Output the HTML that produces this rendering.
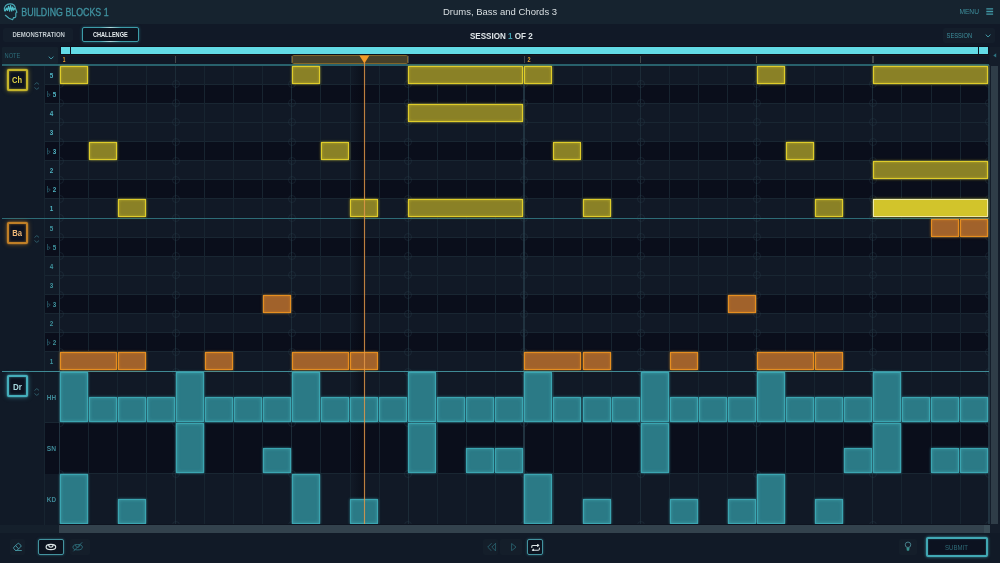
<!DOCTYPE html>
<html><head><meta charset="utf-8"><title>Building Blocks</title>
<style>
*{box-sizing:border-box;margin:0;padding:0}
html,body{width:1000px;height:563px;overflow:hidden;background:#111a27;font-family:"Liberation Sans",sans-serif;}
#app{position:relative;width:1000px;height:563px;overflow:hidden;background:#111a27;color:#5fb6c4}
.abs{position:absolute}
.t{position:absolute;white-space:nowrap;transform-origin:0 0}
#top{left:0;top:0;width:1000px;height:24px;background:#16232f}
#sub{left:0;top:24px;width:1000px;height:23px;background:#111927}
.row{position:absolute;left:59px;width:930px}
.rl{background:#111926}
.rd{background:#0a0e1b}
.hl{position:absolute;left:45px;width:944px;height:1.2px;background:#192632}
.vl{position:absolute;width:1px;background:#172430}
.vb{position:absolute;width:1px;background:#1c2b37}
.circ{position:absolute;width:8px;height:8px;border-radius:50%;border:1px solid rgba(40,62,76,.34)}
.n{position:absolute}
.y{background:#8a8126;border:1px solid #dfcc2a;box-shadow:0 0 2.5px rgba(233,214,42,.7), inset 0 0 3px rgba(233,214,42,.45)}
.yh{background:#d2c42b;border:1px solid #f0eca8;box-shadow:0 0 3px rgba(233,214,42,.6)}
.o{background:#a1622b;border:1px solid #e68e20;box-shadow:0 0 2.5px rgba(240,147,31,.7), inset 0 0 3px rgba(240,147,31,.45)}
.c{background:#2b7a86;border:1px solid #3ba5b1;box-shadow:0 0 2.5px rgba(63,185,197,.7), inset 0 0 3.5px rgba(90,205,215,.4)}
.labd{position:absolute;left:45px;width:14px;background:#0a0e1b}
.sep{position:absolute;left:2px;width:987px;height:2px}
</style></head><body><div id="app">

<div id="top" class="abs"></div><div id="sub" class="abs"></div>
<svg class="abs" style="left:986px;top:8px" width="8" height="8" viewBox="0 0 8 8"><path d="M0.3 0.85 H7.1 M0.3 3.5 H7.1 M0.3 6.15 H7.1" stroke="#4199a7" stroke-width="1.35" fill="none"/></svg>
<svg class="abs" style="left:0;top:0" width="24" height="24" viewBox="0 0 24 24"><path d="M4.6 10.8 C3.4 6.4 6.8 3.9 10 3.9 C13.3 3.9 15.2 6 15.5 8.8 L16.9 12.2 L15.8 13 L15.8 16.3 C15.8 17.4 14.9 17.8 13.6 17.6 L12.6 19.7 L9 18.3 L5.4 15.3" fill="none" stroke="#4aa9b5" stroke-width="1.15" stroke-linejoin="round" stroke-linecap="round"/><path d="M5.3 10.8 L6.4 8.2 L7.4 10.4 L8.5 6.4 L9.6 11.2 L10.6 5.6 L11.7 11 L12.7 7 L13.6 10.2 L14.6 8.6" fill="none" stroke="#4fbfc9" stroke-width="1.25" stroke-linejoin="round" stroke-linecap="round"/></svg>
<div class="abs" style="left:3px;top:27.5px;width:70px;height:14.5px;background:#141e2b;border-radius:2px"></div>
<div class="abs" style="left:82px;top:27px;width:57.2px;height:14.8px;background:#0d1420;border:1px solid #3c9ca8;box-shadow:0 0 3px rgba(58,163,176,.55);border-radius:2px"></div>
<div class="abs" style="left:100px;top:27px;width:21px;height:1px;background:linear-gradient(90deg,rgba(190,225,228,0),rgba(190,225,228,.9),rgba(190,225,228,0))"></div>
<div class="abs" style="left:100px;top:40.8px;width:21px;height:1px;background:linear-gradient(90deg,rgba(190,225,228,0),rgba(190,225,228,.9),rgba(190,225,228,0))"></div>
<div class="abs" style="left:942.8px;top:27.7px;width:52.4px;height:15.3px;background:#141e2b;border-radius:2px"></div>
<svg class="abs" style="left:984.5px;top:33.6px" width="6.2" height="3.8" viewBox="0 0 6.2 3.8"><path d="M0.7 0.6 L3.1 3 L5.5 0.6" fill="none" stroke="#45a3b1" stroke-width="0.95"/></svg>
<div class="abs" style="left:1.5px;top:47px;width:56.5px;height:16.5px;background:#15212d;border-radius:1px"></div>
<svg class="abs" style="left:48.2px;top:55.5px" width="6.2" height="3.8" viewBox="0 0 6.2 3.8"><path d="M0.7 0.6 L3.1 3 L5.5 0.6" fill="none" stroke="#45a3b1" stroke-width="0.95"/></svg>
<div class="abs" style="left:59.5px;top:46.2px;width:929.5px;height:9px;background:#0b111d"></div>
<div class="abs" style="left:60.5px;top:47.2px;width:9px;height:6.4px;background:#63dbe6"></div>
<div class="abs" style="left:70.6px;top:47.2px;width:907.3px;height:6.4px;background:#63dbe6"></div>
<div class="abs" style="left:978.9px;top:47.2px;width:9.6px;height:6.4px;background:#63dbe6"></div>
<div class="abs" style="left:59.5px;top:55.2px;width:929.5px;height:8.6px;background:#101725;border-top:1px solid #1b1a1e"></div>
<div class="abs" style="left:175.00px;top:56px;width:1.4px;height:6.8px;background:#40474a"></div>
<div class="abs" style="left:291.20px;top:56px;width:1.4px;height:6.8px;background:#40474a"></div>
<div class="abs" style="left:407.40px;top:56px;width:1.4px;height:6.8px;background:#40474a"></div>
<div class="abs" style="left:523.60px;top:56px;width:1.4px;height:6.8px;background:#40474a"></div>
<div class="abs" style="left:639.80px;top:56px;width:1.4px;height:6.8px;background:#40474a"></div>
<div class="abs" style="left:756.00px;top:56px;width:1.4px;height:6.8px;background:#40474a"></div>
<div class="abs" style="left:872.20px;top:56px;width:1.4px;height:6.8px;background:#40474a"></div>
<div class="abs" style="left:291.90px;top:55px;width:116.20px;height:8.5px;background:#46402a;border:1px solid #80652a;border-radius:1.5px"></div>
<div class="row rl" style="top:65.30px;height:19.05px"></div>
<div class="row rd" style="top:84.35px;height:19.05px"></div>
<div class="labd" style="top:84.35px;height:19.05px"></div>
<svg class="abs" style="left:47.2px;top:90.77px" width="3.4" height="6.6" viewBox="0 0 3.4 6.6"><path d="M0.5 0 V6.2 C2 5.4 2.9 4.6 2.9 3.7 C2.9 2.7 1.4 2.6 0.5 3.6" fill="none" stroke="#2b5f6d" stroke-width="0.75"/></svg>
<div class="row rl" style="top:103.40px;height:19.05px"></div>
<div class="row rl" style="top:122.45px;height:19.05px"></div>
<div class="row rd" style="top:141.50px;height:19.05px"></div>
<div class="labd" style="top:141.50px;height:19.05px"></div>
<svg class="abs" style="left:47.2px;top:147.93px" width="3.4" height="6.6" viewBox="0 0 3.4 6.6"><path d="M0.5 0 V6.2 C2 5.4 2.9 4.6 2.9 3.7 C2.9 2.7 1.4 2.6 0.5 3.6" fill="none" stroke="#2b5f6d" stroke-width="0.75"/></svg>
<div class="row rl" style="top:160.55px;height:19.05px"></div>
<div class="row rd" style="top:179.60px;height:19.05px"></div>
<div class="labd" style="top:179.60px;height:19.05px"></div>
<svg class="abs" style="left:47.2px;top:186.03px" width="3.4" height="6.6" viewBox="0 0 3.4 6.6"><path d="M0.5 0 V6.2 C2 5.4 2.9 4.6 2.9 3.7 C2.9 2.7 1.4 2.6 0.5 3.6" fill="none" stroke="#2b5f6d" stroke-width="0.75"/></svg>
<div class="row rl" style="top:198.65px;height:19.05px"></div>
<div class="hl" style="top:83.85px"></div>
<div class="hl" style="top:102.90px"></div>
<div class="hl" style="top:121.95px"></div>
<div class="hl" style="top:141.00px"></div>
<div class="hl" style="top:160.05px"></div>
<div class="hl" style="top:179.10px"></div>
<div class="hl" style="top:198.15px"></div>
<div class="row rl" style="top:218.20px;height:19.08px"></div>
<div class="row rd" style="top:237.28px;height:19.08px"></div>
<div class="labd" style="top:237.28px;height:19.08px"></div>
<svg class="abs" style="left:47.2px;top:243.72px" width="3.4" height="6.6" viewBox="0 0 3.4 6.6"><path d="M0.5 0 V6.2 C2 5.4 2.9 4.6 2.9 3.7 C2.9 2.7 1.4 2.6 0.5 3.6" fill="none" stroke="#2b5f6d" stroke-width="0.75"/></svg>
<div class="row rl" style="top:256.36px;height:19.08px"></div>
<div class="row rl" style="top:275.44px;height:19.08px"></div>
<div class="row rd" style="top:294.52px;height:19.08px"></div>
<div class="labd" style="top:294.52px;height:19.08px"></div>
<svg class="abs" style="left:47.2px;top:300.96px" width="3.4" height="6.6" viewBox="0 0 3.4 6.6"><path d="M0.5 0 V6.2 C2 5.4 2.9 4.6 2.9 3.7 C2.9 2.7 1.4 2.6 0.5 3.6" fill="none" stroke="#2b5f6d" stroke-width="0.75"/></svg>
<div class="row rl" style="top:313.60px;height:19.08px"></div>
<div class="row rd" style="top:332.68px;height:19.08px"></div>
<div class="labd" style="top:332.68px;height:19.08px"></div>
<svg class="abs" style="left:47.2px;top:339.12px" width="3.4" height="6.6" viewBox="0 0 3.4 6.6"><path d="M0.5 0 V6.2 C2 5.4 2.9 4.6 2.9 3.7 C2.9 2.7 1.4 2.6 0.5 3.6" fill="none" stroke="#2b5f6d" stroke-width="0.75"/></svg>
<div class="row rl" style="top:351.76px;height:19.08px"></div>
<div class="hl" style="top:236.78px"></div>
<div class="hl" style="top:255.86px"></div>
<div class="hl" style="top:274.94px"></div>
<div class="hl" style="top:294.02px"></div>
<div class="hl" style="top:313.10px"></div>
<div class="hl" style="top:332.18px"></div>
<div class="hl" style="top:351.26px"></div>
<div class="row rl" style="top:371.50px;height:51.00px"></div>
<div class="row rd" style="top:422.50px;height:51.00px"></div>
<div class="row rl" style="top:473.50px;height:51.00px"></div>
<div class="hl" style="top:422.00px"></div>
<div class="hl" style="top:473.00px"></div>
<div class="labd" style="top:422.50px;height:51.00px"></div>
<div class="abs" style="left:58.60px;top:65px;width:1.8px;height:460px;background:#213340"></div>
<div class="vl" style="left:88.05px;top:65px;height:460px"></div>
<div class="vl" style="left:117.10px;top:65px;height:460px"></div>
<div class="vl" style="left:146.15px;top:65px;height:460px"></div>
<div class="vb" style="left:175.20px;top:65px;height:460px"></div>
<div class="vl" style="left:204.25px;top:65px;height:460px"></div>
<div class="vl" style="left:233.30px;top:65px;height:460px"></div>
<div class="vl" style="left:262.35px;top:65px;height:460px"></div>
<div class="vb" style="left:291.40px;top:65px;height:460px"></div>
<div class="vl" style="left:320.45px;top:65px;height:460px"></div>
<div class="vl" style="left:349.50px;top:65px;height:460px"></div>
<div class="vl" style="left:378.55px;top:65px;height:460px"></div>
<div class="vb" style="left:407.60px;top:65px;height:460px"></div>
<div class="vl" style="left:436.65px;top:65px;height:460px"></div>
<div class="vl" style="left:465.70px;top:65px;height:460px"></div>
<div class="vl" style="left:494.75px;top:65px;height:460px"></div>
<div class="abs" style="left:523.40px;top:65px;width:1.8px;height:460px;background:#213340"></div>
<div class="vl" style="left:552.85px;top:65px;height:460px"></div>
<div class="vl" style="left:581.90px;top:65px;height:460px"></div>
<div class="vl" style="left:610.95px;top:65px;height:460px"></div>
<div class="vb" style="left:640.00px;top:65px;height:460px"></div>
<div class="vl" style="left:669.05px;top:65px;height:460px"></div>
<div class="vl" style="left:698.10px;top:65px;height:460px"></div>
<div class="vl" style="left:727.15px;top:65px;height:460px"></div>
<div class="vb" style="left:756.20px;top:65px;height:460px"></div>
<div class="vl" style="left:785.25px;top:65px;height:460px"></div>
<div class="vl" style="left:814.30px;top:65px;height:460px"></div>
<div class="vl" style="left:843.35px;top:65px;height:460px"></div>
<div class="vb" style="left:872.40px;top:65px;height:460px"></div>
<div class="vl" style="left:901.45px;top:65px;height:460px"></div>
<div class="vl" style="left:930.50px;top:65px;height:460px"></div>
<div class="vl" style="left:959.55px;top:65px;height:460px"></div>
<div class="abs" style="left:988.20px;top:65px;width:1.8px;height:460px;background:#213340"></div>
<div class="vl" style="left:44.3px;top:65px;height:460px"></div>
<div class="abs" style="left:59.5px;top:65px;width:929.5px;height:460px;overflow:hidden">
<div class="circ" style="left:-4.00px;top:15.35px"></div>
<div class="circ" style="left:-4.00px;top:34.40px"></div>
<div class="circ" style="left:-4.00px;top:53.45px"></div>
<div class="circ" style="left:-4.00px;top:72.50px"></div>
<div class="circ" style="left:-4.00px;top:91.55px"></div>
<div class="circ" style="left:-4.00px;top:110.60px"></div>
<div class="circ" style="left:-4.00px;top:129.65px"></div>
<div class="circ" style="left:-4.00px;top:168.28px"></div>
<div class="circ" style="left:-4.00px;top:187.36px"></div>
<div class="circ" style="left:-4.00px;top:206.44px"></div>
<div class="circ" style="left:-4.00px;top:225.52px"></div>
<div class="circ" style="left:-4.00px;top:244.60px"></div>
<div class="circ" style="left:-4.00px;top:263.68px"></div>
<div class="circ" style="left:-4.00px;top:282.76px"></div>
<div class="circ" style="left:-4.00px;top:353.50px"></div>
<div class="circ" style="left:-4.00px;top:404.50px"></div>
<div class="circ" style="left:-4.00px;top:149.20px"></div>
<div class="circ" style="left:-4.00px;top:302.50px"></div>
<div class="circ" style="left:-4.00px;top:455.50px"></div>
<div class="circ" style="left:112.20px;top:15.35px"></div>
<div class="circ" style="left:112.20px;top:34.40px"></div>
<div class="circ" style="left:112.20px;top:53.45px"></div>
<div class="circ" style="left:112.20px;top:72.50px"></div>
<div class="circ" style="left:112.20px;top:91.55px"></div>
<div class="circ" style="left:112.20px;top:110.60px"></div>
<div class="circ" style="left:112.20px;top:129.65px"></div>
<div class="circ" style="left:112.20px;top:168.28px"></div>
<div class="circ" style="left:112.20px;top:187.36px"></div>
<div class="circ" style="left:112.20px;top:206.44px"></div>
<div class="circ" style="left:112.20px;top:225.52px"></div>
<div class="circ" style="left:112.20px;top:244.60px"></div>
<div class="circ" style="left:112.20px;top:263.68px"></div>
<div class="circ" style="left:112.20px;top:282.76px"></div>
<div class="circ" style="left:112.20px;top:353.50px"></div>
<div class="circ" style="left:112.20px;top:404.50px"></div>
<div class="circ" style="left:112.20px;top:149.20px"></div>
<div class="circ" style="left:112.20px;top:302.50px"></div>
<div class="circ" style="left:112.20px;top:455.50px"></div>
<div class="circ" style="left:228.40px;top:15.35px"></div>
<div class="circ" style="left:228.40px;top:34.40px"></div>
<div class="circ" style="left:228.40px;top:53.45px"></div>
<div class="circ" style="left:228.40px;top:72.50px"></div>
<div class="circ" style="left:228.40px;top:91.55px"></div>
<div class="circ" style="left:228.40px;top:110.60px"></div>
<div class="circ" style="left:228.40px;top:129.65px"></div>
<div class="circ" style="left:228.40px;top:168.28px"></div>
<div class="circ" style="left:228.40px;top:187.36px"></div>
<div class="circ" style="left:228.40px;top:206.44px"></div>
<div class="circ" style="left:228.40px;top:225.52px"></div>
<div class="circ" style="left:228.40px;top:244.60px"></div>
<div class="circ" style="left:228.40px;top:263.68px"></div>
<div class="circ" style="left:228.40px;top:282.76px"></div>
<div class="circ" style="left:228.40px;top:353.50px"></div>
<div class="circ" style="left:228.40px;top:404.50px"></div>
<div class="circ" style="left:228.40px;top:149.20px"></div>
<div class="circ" style="left:228.40px;top:302.50px"></div>
<div class="circ" style="left:228.40px;top:455.50px"></div>
<div class="circ" style="left:344.60px;top:15.35px"></div>
<div class="circ" style="left:344.60px;top:34.40px"></div>
<div class="circ" style="left:344.60px;top:53.45px"></div>
<div class="circ" style="left:344.60px;top:72.50px"></div>
<div class="circ" style="left:344.60px;top:91.55px"></div>
<div class="circ" style="left:344.60px;top:110.60px"></div>
<div class="circ" style="left:344.60px;top:129.65px"></div>
<div class="circ" style="left:344.60px;top:168.28px"></div>
<div class="circ" style="left:344.60px;top:187.36px"></div>
<div class="circ" style="left:344.60px;top:206.44px"></div>
<div class="circ" style="left:344.60px;top:225.52px"></div>
<div class="circ" style="left:344.60px;top:244.60px"></div>
<div class="circ" style="left:344.60px;top:263.68px"></div>
<div class="circ" style="left:344.60px;top:282.76px"></div>
<div class="circ" style="left:344.60px;top:353.50px"></div>
<div class="circ" style="left:344.60px;top:404.50px"></div>
<div class="circ" style="left:344.60px;top:149.20px"></div>
<div class="circ" style="left:344.60px;top:302.50px"></div>
<div class="circ" style="left:344.60px;top:455.50px"></div>
<div class="circ" style="left:460.80px;top:15.35px"></div>
<div class="circ" style="left:460.80px;top:34.40px"></div>
<div class="circ" style="left:460.80px;top:53.45px"></div>
<div class="circ" style="left:460.80px;top:72.50px"></div>
<div class="circ" style="left:460.80px;top:91.55px"></div>
<div class="circ" style="left:460.80px;top:110.60px"></div>
<div class="circ" style="left:460.80px;top:129.65px"></div>
<div class="circ" style="left:460.80px;top:168.28px"></div>
<div class="circ" style="left:460.80px;top:187.36px"></div>
<div class="circ" style="left:460.80px;top:206.44px"></div>
<div class="circ" style="left:460.80px;top:225.52px"></div>
<div class="circ" style="left:460.80px;top:244.60px"></div>
<div class="circ" style="left:460.80px;top:263.68px"></div>
<div class="circ" style="left:460.80px;top:282.76px"></div>
<div class="circ" style="left:460.80px;top:353.50px"></div>
<div class="circ" style="left:460.80px;top:404.50px"></div>
<div class="circ" style="left:460.80px;top:149.20px"></div>
<div class="circ" style="left:460.80px;top:302.50px"></div>
<div class="circ" style="left:460.80px;top:455.50px"></div>
<div class="circ" style="left:577.00px;top:15.35px"></div>
<div class="circ" style="left:577.00px;top:34.40px"></div>
<div class="circ" style="left:577.00px;top:53.45px"></div>
<div class="circ" style="left:577.00px;top:72.50px"></div>
<div class="circ" style="left:577.00px;top:91.55px"></div>
<div class="circ" style="left:577.00px;top:110.60px"></div>
<div class="circ" style="left:577.00px;top:129.65px"></div>
<div class="circ" style="left:577.00px;top:168.28px"></div>
<div class="circ" style="left:577.00px;top:187.36px"></div>
<div class="circ" style="left:577.00px;top:206.44px"></div>
<div class="circ" style="left:577.00px;top:225.52px"></div>
<div class="circ" style="left:577.00px;top:244.60px"></div>
<div class="circ" style="left:577.00px;top:263.68px"></div>
<div class="circ" style="left:577.00px;top:282.76px"></div>
<div class="circ" style="left:577.00px;top:353.50px"></div>
<div class="circ" style="left:577.00px;top:404.50px"></div>
<div class="circ" style="left:577.00px;top:149.20px"></div>
<div class="circ" style="left:577.00px;top:302.50px"></div>
<div class="circ" style="left:577.00px;top:455.50px"></div>
<div class="circ" style="left:693.20px;top:15.35px"></div>
<div class="circ" style="left:693.20px;top:34.40px"></div>
<div class="circ" style="left:693.20px;top:53.45px"></div>
<div class="circ" style="left:693.20px;top:72.50px"></div>
<div class="circ" style="left:693.20px;top:91.55px"></div>
<div class="circ" style="left:693.20px;top:110.60px"></div>
<div class="circ" style="left:693.20px;top:129.65px"></div>
<div class="circ" style="left:693.20px;top:168.28px"></div>
<div class="circ" style="left:693.20px;top:187.36px"></div>
<div class="circ" style="left:693.20px;top:206.44px"></div>
<div class="circ" style="left:693.20px;top:225.52px"></div>
<div class="circ" style="left:693.20px;top:244.60px"></div>
<div class="circ" style="left:693.20px;top:263.68px"></div>
<div class="circ" style="left:693.20px;top:282.76px"></div>
<div class="circ" style="left:693.20px;top:353.50px"></div>
<div class="circ" style="left:693.20px;top:404.50px"></div>
<div class="circ" style="left:693.20px;top:149.20px"></div>
<div class="circ" style="left:693.20px;top:302.50px"></div>
<div class="circ" style="left:693.20px;top:455.50px"></div>
<div class="circ" style="left:809.40px;top:15.35px"></div>
<div class="circ" style="left:809.40px;top:34.40px"></div>
<div class="circ" style="left:809.40px;top:53.45px"></div>
<div class="circ" style="left:809.40px;top:72.50px"></div>
<div class="circ" style="left:809.40px;top:91.55px"></div>
<div class="circ" style="left:809.40px;top:110.60px"></div>
<div class="circ" style="left:809.40px;top:129.65px"></div>
<div class="circ" style="left:809.40px;top:168.28px"></div>
<div class="circ" style="left:809.40px;top:187.36px"></div>
<div class="circ" style="left:809.40px;top:206.44px"></div>
<div class="circ" style="left:809.40px;top:225.52px"></div>
<div class="circ" style="left:809.40px;top:244.60px"></div>
<div class="circ" style="left:809.40px;top:263.68px"></div>
<div class="circ" style="left:809.40px;top:282.76px"></div>
<div class="circ" style="left:809.40px;top:353.50px"></div>
<div class="circ" style="left:809.40px;top:404.50px"></div>
<div class="circ" style="left:809.40px;top:149.20px"></div>
<div class="circ" style="left:809.40px;top:302.50px"></div>
<div class="circ" style="left:809.40px;top:455.50px"></div>
<div class="circ" style="left:925.60px;top:15.35px"></div>
<div class="circ" style="left:925.60px;top:34.40px"></div>
<div class="circ" style="left:925.60px;top:53.45px"></div>
<div class="circ" style="left:925.60px;top:72.50px"></div>
<div class="circ" style="left:925.60px;top:91.55px"></div>
<div class="circ" style="left:925.60px;top:110.60px"></div>
<div class="circ" style="left:925.60px;top:129.65px"></div>
<div class="circ" style="left:925.60px;top:168.28px"></div>
<div class="circ" style="left:925.60px;top:187.36px"></div>
<div class="circ" style="left:925.60px;top:206.44px"></div>
<div class="circ" style="left:925.60px;top:225.52px"></div>
<div class="circ" style="left:925.60px;top:244.60px"></div>
<div class="circ" style="left:925.60px;top:263.68px"></div>
<div class="circ" style="left:925.60px;top:282.76px"></div>
<div class="circ" style="left:925.60px;top:353.50px"></div>
<div class="circ" style="left:925.60px;top:404.50px"></div>
<div class="circ" style="left:925.60px;top:149.20px"></div>
<div class="circ" style="left:925.60px;top:302.50px"></div>
<div class="circ" style="left:925.60px;top:455.50px"></div>
</div>
<div class="sep" style="top:64.4px;height:1.2px;background:#28616c"></div>
<div class="sep" style="top:217.6px;height:1.2px;background:#2d6b76"></div>
<div class="sep" style="top:370.8px;height:1.2px;background:#3f8a95"></div>
<div class="abs" style="left:351.6px;top:65.5px;width:13px;height:459px;background:linear-gradient(90deg,rgba(4,6,14,0),rgba(4,6,14,.5))"></div>
<div class="n y" style="left:59.60px;top:65.80px;width:28.05px;height:18.05px"></div>
<div class="n y" style="left:292.00px;top:65.80px;width:28.05px;height:18.05px"></div>
<div class="n y" style="left:408.20px;top:65.80px;width:115.20px;height:18.05px"></div>
<div class="n y" style="left:524.40px;top:65.80px;width:28.05px;height:18.05px"></div>
<div class="n y" style="left:756.80px;top:65.80px;width:28.05px;height:18.05px"></div>
<div class="n y" style="left:873.00px;top:65.80px;width:115.20px;height:18.05px"></div>
<div class="n y" style="left:408.20px;top:103.90px;width:115.20px;height:18.05px"></div>
<div class="n y" style="left:88.65px;top:142.00px;width:28.05px;height:18.05px"></div>
<div class="n y" style="left:321.05px;top:142.00px;width:28.05px;height:18.05px"></div>
<div class="n y" style="left:553.45px;top:142.00px;width:28.05px;height:18.05px"></div>
<div class="n y" style="left:785.85px;top:142.00px;width:28.05px;height:18.05px"></div>
<div class="n y" style="left:873.00px;top:161.05px;width:115.20px;height:18.05px"></div>
<div class="n y" style="left:117.70px;top:199.15px;width:28.05px;height:18.05px"></div>
<div class="n y" style="left:350.10px;top:199.15px;width:28.05px;height:18.05px"></div>
<div class="n y" style="left:408.20px;top:199.15px;width:115.20px;height:18.05px"></div>
<div class="n y" style="left:582.50px;top:199.15px;width:28.05px;height:18.05px"></div>
<div class="n y" style="left:814.90px;top:199.15px;width:28.05px;height:18.05px"></div>
<div class="n yh" style="left:873.00px;top:199.15px;width:115.20px;height:18.05px"></div>
<div class="n o" style="left:931.10px;top:218.70px;width:28.05px;height:18.08px"></div>
<div class="n o" style="left:960.15px;top:218.70px;width:28.05px;height:18.08px"></div>
<div class="n o" style="left:262.95px;top:295.02px;width:28.05px;height:18.08px"></div>
<div class="n o" style="left:727.75px;top:295.02px;width:28.05px;height:18.08px"></div>
<div class="n o" style="left:59.60px;top:352.26px;width:57.10px;height:18.08px"></div>
<div class="n o" style="left:117.70px;top:352.26px;width:28.05px;height:18.08px"></div>
<div class="n o" style="left:204.85px;top:352.26px;width:28.05px;height:18.08px"></div>
<div class="n o" style="left:292.00px;top:352.26px;width:57.10px;height:18.08px"></div>
<div class="n o" style="left:350.10px;top:352.26px;width:28.05px;height:18.08px"></div>
<div class="n o" style="left:524.40px;top:352.26px;width:57.10px;height:18.08px"></div>
<div class="n o" style="left:582.50px;top:352.26px;width:28.05px;height:18.08px"></div>
<div class="n o" style="left:669.65px;top:352.26px;width:28.05px;height:18.08px"></div>
<div class="n o" style="left:756.80px;top:352.26px;width:57.10px;height:18.08px"></div>
<div class="n o" style="left:814.90px;top:352.26px;width:28.05px;height:18.08px"></div>
<div class="n c" style="left:59.60px;top:371.80px;width:28.05px;height:49.80px"></div>
<div class="n c" style="left:88.65px;top:396.80px;width:28.05px;height:24.80px"></div>
<div class="n c" style="left:117.70px;top:396.80px;width:28.05px;height:24.80px"></div>
<div class="n c" style="left:146.75px;top:396.80px;width:28.05px;height:24.80px"></div>
<div class="n c" style="left:175.80px;top:371.80px;width:28.05px;height:49.80px"></div>
<div class="n c" style="left:204.85px;top:396.80px;width:28.05px;height:24.80px"></div>
<div class="n c" style="left:233.90px;top:396.80px;width:28.05px;height:24.80px"></div>
<div class="n c" style="left:262.95px;top:396.80px;width:28.05px;height:24.80px"></div>
<div class="n c" style="left:292.00px;top:371.80px;width:28.05px;height:49.80px"></div>
<div class="n c" style="left:321.05px;top:396.80px;width:28.05px;height:24.80px"></div>
<div class="n c" style="left:350.10px;top:396.80px;width:28.05px;height:24.80px"></div>
<div class="n c" style="left:379.15px;top:396.80px;width:28.05px;height:24.80px"></div>
<div class="n c" style="left:408.20px;top:371.80px;width:28.05px;height:49.80px"></div>
<div class="n c" style="left:437.25px;top:396.80px;width:28.05px;height:24.80px"></div>
<div class="n c" style="left:466.30px;top:396.80px;width:28.05px;height:24.80px"></div>
<div class="n c" style="left:495.35px;top:396.80px;width:28.05px;height:24.80px"></div>
<div class="n c" style="left:524.40px;top:371.80px;width:28.05px;height:49.80px"></div>
<div class="n c" style="left:553.45px;top:396.80px;width:28.05px;height:24.80px"></div>
<div class="n c" style="left:582.50px;top:396.80px;width:28.05px;height:24.80px"></div>
<div class="n c" style="left:611.55px;top:396.80px;width:28.05px;height:24.80px"></div>
<div class="n c" style="left:640.60px;top:371.80px;width:28.05px;height:49.80px"></div>
<div class="n c" style="left:669.65px;top:396.80px;width:28.05px;height:24.80px"></div>
<div class="n c" style="left:698.70px;top:396.80px;width:28.05px;height:24.80px"></div>
<div class="n c" style="left:727.75px;top:396.80px;width:28.05px;height:24.80px"></div>
<div class="n c" style="left:756.80px;top:371.80px;width:28.05px;height:49.80px"></div>
<div class="n c" style="left:785.85px;top:396.80px;width:28.05px;height:24.80px"></div>
<div class="n c" style="left:814.90px;top:396.80px;width:28.05px;height:24.80px"></div>
<div class="n c" style="left:843.95px;top:396.80px;width:28.05px;height:24.80px"></div>
<div class="n c" style="left:873.00px;top:371.80px;width:28.05px;height:49.80px"></div>
<div class="n c" style="left:902.05px;top:396.80px;width:28.05px;height:24.80px"></div>
<div class="n c" style="left:931.10px;top:396.80px;width:28.05px;height:24.80px"></div>
<div class="n c" style="left:960.15px;top:396.80px;width:28.05px;height:24.80px"></div>
<div class="n c" style="left:175.80px;top:422.80px;width:28.05px;height:49.80px"></div>
<div class="n c" style="left:262.95px;top:447.80px;width:28.05px;height:24.80px"></div>
<div class="n c" style="left:408.20px;top:422.80px;width:28.05px;height:49.80px"></div>
<div class="n c" style="left:466.30px;top:447.80px;width:28.05px;height:24.80px"></div>
<div class="n c" style="left:495.35px;top:447.80px;width:28.05px;height:24.80px"></div>
<div class="n c" style="left:640.60px;top:422.80px;width:28.05px;height:49.80px"></div>
<div class="n c" style="left:843.95px;top:447.80px;width:28.05px;height:24.80px"></div>
<div class="n c" style="left:873.00px;top:422.80px;width:28.05px;height:49.80px"></div>
<div class="n c" style="left:931.10px;top:447.80px;width:28.05px;height:24.80px"></div>
<div class="n c" style="left:960.15px;top:447.80px;width:28.05px;height:24.80px"></div>
<div class="n c" style="left:59.60px;top:473.80px;width:28.05px;height:49.80px"></div>
<div class="n c" style="left:117.70px;top:498.80px;width:28.05px;height:24.80px"></div>
<div class="n c" style="left:292.00px;top:473.80px;width:28.05px;height:49.80px"></div>
<div class="n c" style="left:350.10px;top:498.80px;width:28.05px;height:24.80px"></div>
<div class="n c" style="left:524.40px;top:473.80px;width:28.05px;height:49.80px"></div>
<div class="n c" style="left:582.50px;top:498.80px;width:28.05px;height:24.80px"></div>
<div class="n c" style="left:669.65px;top:498.80px;width:28.05px;height:24.80px"></div>
<div class="n c" style="left:727.75px;top:498.80px;width:28.05px;height:24.80px"></div>
<div class="n c" style="left:756.80px;top:473.80px;width:28.05px;height:49.80px"></div>
<div class="n c" style="left:814.90px;top:498.80px;width:28.05px;height:24.80px"></div>
<div class="abs" style="left:363.8px;top:60px;width:1.6px;height:465px;background:rgba(228,152,72,.82);box-shadow:0 0 1.5px rgba(210,140,60,.45)"></div>
<svg class="abs" style="left:359.20000000000005px;top:55px" width="10.8" height="9" viewBox="0 0 10.8 9"><path d="M0.4 0.4 H10.4 L5.4 8.6 Z" fill="#f29a27"/></svg>
<div class="abs" style="left:6.5px;top:68.9px;width:21.8px;height:21.8px;border:2px solid #c4b42b;border-radius:2px;background:#0c1220;box-shadow:0 0 1.5px #c4b42b, 0 0 5px #c4b42b99, inset 0 0 2.5px #c4b42baa"></div>
<svg class="abs" style="left:33.6px;top:81.5px" width="5.6" height="8" viewBox="0 0 5.6 8"><path d="M0.5 2.5 L2.8 0.6 L5.1 2.5 M0.5 5.5 L2.8 7.4 L5.1 5.5" fill="none" stroke="#326774" stroke-width="0.85"/></svg>
<div class="abs" style="left:6.5px;top:222.0px;width:21.8px;height:21.8px;border:2px solid #c07f27;border-radius:2px;background:#0c1220;box-shadow:0 0 1.5px #c07f27, 0 0 5px #c07f2799, inset 0 0 2.5px #c07f27aa"></div>
<svg class="abs" style="left:33.6px;top:234.6px" width="5.6" height="8" viewBox="0 0 5.6 8"><path d="M0.5 2.5 L2.8 0.6 L5.1 2.5 M0.5 5.5 L2.8 7.4 L5.1 5.5" fill="none" stroke="#326774" stroke-width="0.85"/></svg>
<div class="abs" style="left:6.5px;top:375.1px;width:21.8px;height:21.8px;border:2px solid #45aebb;border-radius:2px;background:#0c1220;box-shadow:0 0 1.5px #45aebb, 0 0 5px #45aebb99, inset 0 0 2.5px #45aebbaa"></div>
<svg class="abs" style="left:33.6px;top:387.70000000000005px" width="5.6" height="8" viewBox="0 0 5.6 8"><path d="M0.5 2.5 L2.8 0.6 L5.1 2.5 M0.5 5.5 L2.8 7.4 L5.1 5.5" fill="none" stroke="#326774" stroke-width="0.85"/></svg>
<div class="abs" style="left:989.5px;top:47px;width:10.5px;height:486px;background:#141d2a"></div>
<div class="abs" style="left:990.8px;top:65.8px;width:7px;height:458.2px;background:#2f3d48"></div>
<svg class="abs" style="left:993.2px;top:53.2px" width="3.4" height="4.8" viewBox="0 0 3.4 4.8"><path d="M3.2 0.2 L0.3 2.4 L3.2 4.6 Z" fill="#2d7482"/></svg>
<div class="abs" style="left:0;top:524.8px;width:990px;height:8.2px;background:#15202c"></div>
<div class="abs" style="left:59px;top:523.8px;width:930.5px;height:1.6px;background:#0e1420"></div>
<div class="abs" style="left:59px;top:525.3px;width:931px;height:7.6px;background:#33424d"></div>
<div class="abs" style="left:983.5px;top:525.3px;width:6.5px;height:7.6px;background:#3a4c56"></div>
<div class="abs" style="left:0;top:533px;width:1000px;height:30px;background:#111a27"></div>
<div class="abs" style="left:9.7px;top:538.9px;width:15.8px;height:15.8px;background:#141e2a;border-radius:2px"></div>
<div class="abs" style="left:38px;top:538.7px;width:26.4px;height:16.7px;background:#0c131f;border:1.2px solid #43939f;box-shadow:0 0 2.5px rgba(58,163,176,.55);border-radius:2px"></div>
<div class="abs" style="left:70.4px;top:538.9px;width:19.3px;height:15.8px;background:#141e2a;border-radius:2px"></div>
<svg class="abs" style="left:12px;top:542px" width="11" height="10" viewBox="0 0 11 10"><g transform="rotate(-42 5.3 5)" fill="none" stroke="#4596a3" stroke-width="0.9"><rect x="1.6" y="2.8" width="7.4" height="4.4" rx="1.2"/><path d="M5 2.8 V7.2"/></g><path d="M3.6 8.5 H9.4" stroke="#4596a3" stroke-width="0.9" fill="none" stroke-linecap="round"/></svg>
<svg class="abs" style="left:45px;top:543px" width="12" height="8" viewBox="0 0 12 8"><ellipse cx="5.9" cy="3.95" rx="4.8" ry="2.6" fill="none" stroke="#dbe4e6" stroke-width="1.15"/><path d="M3.7 1.7 C3.7 5 8.1 5 8.1 1.7" fill="none" stroke="#dbe4e6" stroke-width="1.15"/></svg>
<svg class="abs" style="left:71.5px;top:541.8px" width="12" height="10" viewBox="0 0 12 10"><ellipse cx="5.65" cy="5.2" rx="4.7" ry="2.7" fill="none" stroke="#2f7582" stroke-width="0.85"/><path d="M3.5 3.1 C3.5 6.3 7.8 6.3 7.8 3.1 M1.7 9 L9.9 0.6" fill="none" stroke="#2f7582" stroke-width="0.85" stroke-linecap="round"/></svg>
<div class="abs" style="left:483.3px;top:538.9px;width:14.7px;height:15.8px;background:#141e2a;border-radius:2px"></div>
<div class="abs" style="left:500.2px;top:538.9px;width:21.4px;height:15.8px;background:#141e2a;border-radius:2px"></div>
<div class="abs" style="left:526.8px;top:538.7px;width:16.6px;height:16.5px;background:#0c131f;border:1.2px solid #43939f;box-shadow:0 0 2.5px rgba(58,163,176,.55);border-radius:2px"></div>
<svg class="abs" style="left:486.6px;top:543px" width="9.2" height="8.4" viewBox="0 0 9.2 8.4"><path d="M4.3 0.5 L0.7 4.1 L4.3 7.7 M8.4 0.5 L4.8 4.1 L8.4 7.7 Z" fill="none" stroke="#2b6671" stroke-width="0.85" stroke-linejoin="round" stroke-linecap="round"/></svg>
<svg class="abs" style="left:510.6px;top:543.2px" width="5.8" height="8.2" viewBox="0 0 5.8 8.2"><path d="M0.6 0.5 L5.1 4.1 L0.6 7.7 Z" fill="none" stroke="#2b6671" stroke-width="0.85" stroke-linejoin="round"/></svg>
<svg class="abs" style="left:531px;top:543.6px" width="9.2" height="7.6" viewBox="0 0 9.2 7.6"><path d="M0.8 3.5 V2.6 Q0.8 1.4 2 1.4 H7.6 M6.6 0.4 L7.8 1.4 L6.6 2.4 M8.4 4.1 V5 Q8.4 6.2 7.2 6.2 H1.6 M2.6 5.2 L1.4 6.2 L2.6 7.2" fill="none" stroke="#dbe4e6" stroke-width="1.05" stroke-linejoin="round" stroke-linecap="round"/></svg>
<div class="abs" style="left:899.4px;top:538.9px;width:17.6px;height:15.8px;background:#141e2a;border-radius:2px"></div>
<svg class="abs" style="left:904px;top:541px" width="8" height="11" viewBox="0 0 8 11"><circle cx="4" cy="3.8" r="2.75" fill="none" stroke="#4a848f" stroke-width="0.95"/><path d="M2.5 6.7 H5.5 L5.2 9.4 Q4 10.3 2.8 9.4 Z" fill="#35908c"/></svg>
<div class="abs" style="left:925.6px;top:536.5px;width:62.2px;height:20.3px;background:#0c1220;border:2.4px solid #41a8b4;box-shadow:0 0 3px rgba(70,176,188,.8), inset 0 0 1.5px rgba(70,176,188,.6);border-radius:2px"></div>
<svg class="abs" style="left:0;top:0;will-change:transform;font-family:'Liberation Sans',sans-serif" width="1000" height="563" viewBox="0 0 1000 563">
<text transform="translate(21.25,16) scale(0.8444,1)" font-size="10.47" font-weight="normal" fill="#4093a1" stroke="#4093a1" stroke-width="0.3">BUILDING BLOCKS 1</text>
<text transform="translate(442.90,15) scale(0.9739,1)" font-size="9.78" font-weight="normal" fill="#d9dfe2">Drums, Bass and Chords 3</text>
<text transform="translate(959.40,14) scale(0.9255,1)" font-size="7.19" font-weight="normal" fill="#3e8f9d">MENU</text>
<text transform="translate(12.50,37) scale(0.8583,1)" font-size="6.98" font-weight="bold" fill="#c0c9ce">DEMONSTRATION</text>
<text transform="translate(93.00,37) scale(0.8343,1)" font-size="6.70" font-weight="bold" fill="#e6ecee">CHALLENGE</text>
<text transform="translate(469.90,39) scale(0.9203,1)" font-size="8.80" font-weight="bold" fill="#dfe5e8">SESSION <tspan fill="#3fa0b0">1</tspan> OF 2</text>
<text transform="translate(946.60,38) scale(0.8414,1)" font-size="6.84" font-weight="normal" fill="#3e8f9d">SESSION</text>
<text transform="translate(4.50,58) scale(0.9107,1)" font-size="6.28" font-weight="normal" fill="#2c6c7a">NOTE</text>
<text transform="translate(62.80,62) scale(0.7556,1)" font-size="6.42" font-weight="bold" fill="#e8a22c">1</text>
<text transform="translate(527.60,62) scale(0.8676,1)" font-size="6.42" font-weight="bold" fill="#e8a22c">2</text>
<text transform="translate(49.70,78) scale(0.9587,1)" font-size="6.56" font-weight="bold" fill="#4fb3c2">5</text>
<text transform="translate(52.70,97) scale(0.9587,1)" font-size="6.56" font-weight="bold" fill="#4fb3c2">5</text>
<text transform="translate(49.70,116) scale(0.9587,1)" font-size="6.56" font-weight="bold" fill="#4fb3c2">4</text>
<text transform="translate(49.70,135) scale(0.9587,1)" font-size="6.56" font-weight="bold" fill="#4fb3c2">3</text>
<text transform="translate(52.70,154) scale(0.9587,1)" font-size="6.56" font-weight="bold" fill="#4fb3c2">3</text>
<text transform="translate(49.70,173) scale(0.9587,1)" font-size="6.56" font-weight="bold" fill="#4fb3c2">2</text>
<text transform="translate(52.70,192) scale(0.9587,1)" font-size="6.56" font-weight="bold" fill="#4fb3c2">2</text>
<text transform="translate(49.70,211) scale(0.9587,1)" font-size="6.56" font-weight="bold" fill="#4fb3c2">1</text>
<text transform="translate(49.70,231) scale(0.9587,1)" font-size="6.56" font-weight="bold" fill="#3f949f">5</text>
<text transform="translate(52.70,250) scale(0.9587,1)" font-size="6.56" font-weight="bold" fill="#3f949f">5</text>
<text transform="translate(49.70,269) scale(0.9587,1)" font-size="6.56" font-weight="bold" fill="#3f949f">4</text>
<text transform="translate(49.70,288) scale(0.9587,1)" font-size="6.56" font-weight="bold" fill="#3f949f">3</text>
<text transform="translate(52.70,307) scale(0.9587,1)" font-size="6.56" font-weight="bold" fill="#3f949f">3</text>
<text transform="translate(49.70,326) scale(0.9587,1)" font-size="6.56" font-weight="bold" fill="#3f949f">2</text>
<text transform="translate(52.70,345) scale(0.9587,1)" font-size="6.56" font-weight="bold" fill="#3f949f">2</text>
<text transform="translate(49.70,364) scale(0.9587,1)" font-size="6.56" font-weight="bold" fill="#3f949f">1</text>
<text transform="translate(46.80,400) scale(0.9605,1)" font-size="6.70" font-weight="bold" fill="#3f8a98">HH</text>
<text transform="translate(46.80,451) scale(0.9986,1)" font-size="6.70" font-weight="bold" fill="#3f8a98">SN</text>
<text transform="translate(46.80,502) scale(0.9605,1)" font-size="6.70" font-weight="bold" fill="#3f8a98">KD</text>
<text transform="translate(12.10,83) scale(0.8017,1)" font-size="9.36" font-weight="bold" fill="#e4d445">Ch</text>
<text transform="translate(12.30,236) scale(0.8192,1)" font-size="9.36" font-weight="bold" fill="#f0b878">Ba</text>
<text transform="translate(12.90,390) scale(0.8822,1)" font-size="9.08" font-weight="bold" fill="#a8dae0">Dr</text>
<text transform="translate(945.00,550) scale(0.8189,1)" font-size="7.40" font-weight="normal" fill="#2f6b78">SUBMIT</text>
</svg>
</div></body></html>
